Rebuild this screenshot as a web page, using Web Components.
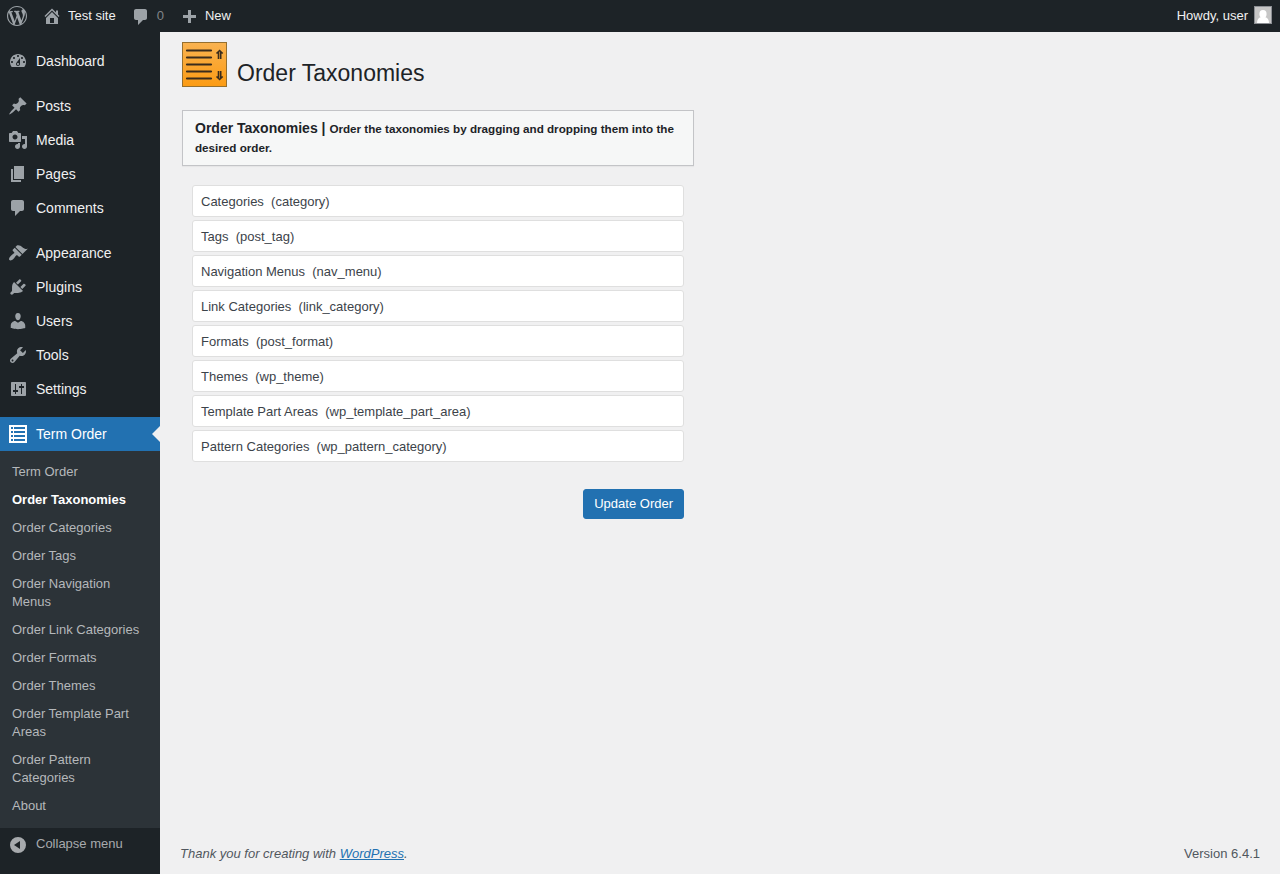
<!DOCTYPE html>
<html lang="en">
<head>
<meta charset="utf-8">
<meta name="viewport" content="width=device-width, initial-scale=1">
<title>Order Taxonomies ‹ Test site — WordPress</title>
<style>
  body { margin: 0; background: #f0f0f1; color: #3c434a; font: 13px/18px "Liberation Sans", Arial, sans-serif; }
</style>
</head>
<body>
<admin-page></admin-page>
<script>
const ICONS = {
  wordpress: '<path d="M20 10c0-5.51-4.49-10-10-10C4.48 0 0 4.49 0 10c0 5.52 4.48 10 10 10 5.51 0 10-4.48 10-10zM7.78 15.37L4.37 6.22c.55-.02 1.17-.08 1.17-.08.5-.06.44-1.13-.06-1.11 0 0-1.45.11-2.37.11-.18 0-.37 0-.58-.01C4.12 2.69 6.87 1.11 10 1.11c2.33 0 4.45.87 6.05 2.34-.68-.11-1.65.39-1.65 1.58 0 .74.45 1.36.9 2.1.35.61.55 1.36.55 2.46 0 1.49-1.4 5-1.4 5l-3.03-8.37c.54-.02.82-.17.82-.17.5-.05.44-1.25-.06-1.22 0 0-1.44.12-2.38.12-.87 0-2.33-.12-2.33-.12-.5-.03-.56 1.2-.06 1.22l.92.08 1.26 3.41zM17.41 10c.24-.64.74-1.87.43-4.25.7 1.29 1.05 2.71 1.05 4.25 0 3.29-1.73 6.24-4.4 7.78.97-2.59 1.94-5.2 2.92-7.78zM6.1 18.09C3.12 16.65 1.11 13.53 1.11 10c0-1.3.23-2.48.72-3.59C3.25 10.3 4.67 14.2 6.1 18.09zm4.03-6.63l2.58 6.98c-.86.29-1.76.45-2.71.45-.79 0-1.57-.11-2.29-.33.81-2.38 1.62-4.74 2.42-7.1z"/>',
  home: '<path d="M16 8.5l1.53 1.53-1.06 1.06L10 4.6l-6.47 6.49-1.06-1.06L10 2.5l4 4v-2h2v4zm-6-2.46l6 5.99V18H4v-5.97zM12 17v-5H8v5h4z"/>',
  comments: '<path d="M5 2h9c1.1 0 2 .9 2 2v7c0 1.1-.9 2-2 2h-2l-5 5v-5H5c-1.1 0-2-.9-2-2V4c0-1.1.9-2 2-2z"/>',
  bubble: '<path d="M5 3h9c1.1 0 2 .9 2 2v7c0 1.1-.9 2-2 2h-2l-5 5v-5H5c-1.1 0-2-.9-2-2V5c0-1.1.9-2 2-2z"/>',
  plus: '<path d="M17 9v3h-5v5H9v-5H4V9h5V4h3v5h5z"/>',
  dashboard: '<path d="M3.76 16h12.48c1.1-1.37 1.76-3.11 1.76-5 0-4.42-3.58-8-8-8s-8 3.58-8 8c0 1.89.66 3.63 1.76 5zM10 4c.55 0 1 .45 1 1s-.45 1-1 1-1-.45-1-1 .45-1 1-1zM6 6c.55 0 1 .45 1 1s-.45 1-1 1-1-.45-1-1 .45-1 1-1zm8 0c.55 0 1 .45 1 1s-.45 1-1 1-1-.45-1-1 .45-1 1-1zm-5.37 5.55L12 7v6c0 1.1-.9 2-2 2s-2-.9-2-2c0-.57.24-1.08.63-1.45zM4 10c.55 0 1 .45 1 1s-.45 1-1 1-1-.45-1-1 .45-1 1-1zm12 0c.55 0 1 .45 1 1s-.45 1-1 1-1-.45-1-1 .45-1 1-1zm-5 3c0-.55-.45-1-1-1s-1 .45-1 1 .45 1 1 1 1-.45 1-1z"/>',
  post: '<path d="M10.44 3.02l1.82-1.82 6.36 6.35-1.83 1.82c-1.05-.68-2.48-.57-3.41.36l-.75.75c-.92.93-1.04 2.35-.35 3.41l-1.83 1.82-2.41-2.41-2.8 2.79c-.42.42-3.38 2.71-3.8 2.29s1.86-3.39 2.28-3.81l2.79-2.79L4.1 9.36l1.83-1.82c1.05.69 2.48.57 3.4-.36l.75-.75c.93-.92 1.05-2.35.36-3.41z"/>',
  media: '<path d="M13 11V4c0-.55-.45-1-1-1h-1.67L9 1H5L3.67 3H2c-.55 0-1 .45-1 1v7c0 .55.45 1 1 1h10c.55 0 1-.45 1-1zM7 4.5c1.38 0 2.5 1.12 2.5 2.5S8.38 9.5 7 9.5 4.5 8.38 4.5 7 5.62 4.5 7 4.5zM14 6h5v10.5c0 1.38-1.12 2.5-2.5 2.5S14 17.88 14 16.5s1.12-2.5 2.5-2.5c.17 0 .34.02.5.05V9h-3V6zm-4 8.05V13h2v3.5c0 1.38-1.12 2.5-2.5 2.5S7 17.88 7 16.5 8.12 14 9.5 14c.17 0 .34.02.5.05z"/>',
  page: '<path d="M6 15V2h10v13H6zm-1 1h8v2H3V5h2v11z"/>',
  appearance: '<path d="M14.48 11.06L7.41 3.99l1.5-1.5c.5-.56 2.3-.47 3.51.32 1.21.8 1.43 1.28 2.91 2.1 1.18.64 2.45 1.26 4.45.85zm-.71.71L6.7 4.7 4.93 6.47c-.39.39-.39 1.02 0 1.41l1.06 1.06c.39.39.39 1.03 0 1.42-.6.6-1.43 1.11-2.21 1.69-.35.26-.7.53-1.01.84C1.43 14.23.4 16.08 1.4 17.07c.99 1 2.84-.03 4.18-1.36.31-.31.58-.66.85-1.02.57-.78 1.08-1.61 1.69-2.21.39-.39 1.02-.39 1.41 0l1.06 1.06c.39.39 1.02.39 1.41 0z"/>',
  plugins: '<path d="M13.11 4.36L9.87 7.6 8 5.73l3.24-3.24c.35-.34 1.05-.2 1.56.32.52.51.66 1.21.31 1.55zm-8 1.77l.91-1.12 9.01 9.01-1.19.84c-.71.71-2.63 1.16-3.82 1.16H6.14L4.9 17.26c-.59.59-1.54.59-2.12 0-.59-.58-.59-1.53 0-2.12l1.24-1.24v-3.88c0-1.13.4-3.19 1.09-3.89zm7.26 3.97l3.24-3.24c.34-.35 1.04-.21 1.55.31.52.51.66 1.21.31 1.55l-3.24 3.25z"/>',
  users: '<path d="M10 9.25c-2.27 0-2.73-3.44-2.73-3.44C7 4.02 7.82 2 9.97 2c2.16 0 2.98 2.02 2.71 3.81 0 0-.41 3.44-2.68 3.44zm0 2.57L12.72 10c2.39 0 4.52 2.33 4.52 4.53v2.49s-3.65 1.13-7.24 1.13c-3.65 0-7.24-1.13-7.24-1.13v-2.49c0-2.25 1.94-4.48 4.47-4.48z"/>',
  tools: '<path d="M16.68 9.77c-1.34 1.34-3.3 1.67-4.95.99l-5.41 6.52c-.99.99-2.59.99-3.58 0s-.99-2.59 0-3.57l6.52-5.42c-.68-1.65-.35-3.61.99-4.95 1.28-1.28 3.12-1.62 4.72-1.06l-2.89 2.89 2.82 2.82 2.86-2.87c.53 1.58.18 3.39-1.08 4.65zM3.81 16.21c.4.39 1.04.39 1.43 0 .4-.4.4-1.04 0-1.43-.39-.4-1.03-.4-1.43 0-.39.39-.39 1.03 0 1.43z"/>',
  settings: '<path fill-rule="evenodd" d="M4 3h13c.55 0 1 .45 1 1v12c0 .55-.45 1-1 1H4c-.55 0-1-.45-1-1V4c0-.55.45-1 1-1zM7 5v6H5v2h2v2h1v-2h2v-2H8V5zM13 5v2h-2v2h2v6h1V9h2V7h-2V5z"/>',
  list: '<path fill-rule="evenodd" d="M1 1h18v18H1zM3 3v2h2V3zM6 3v2h11V3zM3 7v2h2V7zM6 7v2h11V7zM3 11v2h2v-2zM6 11v2h11v-2zM3 15v2h2v-2zM6 15v2h11v-2z"/>',
  collapse: '<path fill-rule="evenodd" d="M10 2a8 8 0 1 0 0 16a8 8 0 1 0 0-16zM12 14V6l-6 4z"/>'
};

class WpIcon extends HTMLElement {
  connectedCallback() {
    if (this.shadowRoot) return;
    this.attachShadow({ mode: 'open' }).innerHTML =
      `<style>:host{display:block;flex:none;width:20px;height:20px}svg{display:block;width:100%;height:100%;fill:currentColor}</style>
       <svg viewBox="0 0 20 20" aria-hidden="true">${ICONS[this.getAttribute('name')]}</svg>`;
  }
}

class AdminBar extends HTMLElement {
  constructor() {
    super();
    this.attachShadow({ mode: 'open' }).innerHTML = `
      <style>
        :host { display: flex; justify-content: space-between; height: 32px; background: #1d2327; line-height: 32px; }
        nav { display: flex; }
        a { display: flex; align-items: center; gap: 6px; padding: 0 8px 0 7px; color: #f0f0f1; text-decoration: none; }
        wp-icon { color: #9ca2a7; }
        .count { color: #818589; }
        .avatar { width: 16px; height: 16px; margin-bottom: 2px; border: 1px solid #8c8f94; background: #c6c6c6; }
      </style>
      <nav aria-label="Toolbar">
        <a href="#" aria-label="About WordPress"><wp-icon name="wordpress"></wp-icon></a>
        <a href="#"><wp-icon name="home"></wp-icon><span>Test site</span></a>
        <a href="#"><wp-icon name="bubble"></wp-icon><span class="count">0</span></a>
        <a href="#"><wp-icon name="plus"></wp-icon><span>New</span></a>
      </nav>
      <a href="#"><span>Howdy, user</span>
        <svg class="avatar" viewBox="0 0 16 16" aria-hidden="true"><ellipse cx="8" cy="7" rx="3.6" ry="4" fill="#fff"/><path d="M2 16c0-3.500 1.500-5.500 4-6h4c2.500.5 4 2.500 4 6z" fill="#fff"/></svg>
      </a>`;
  }
}

class MenuItem extends HTMLElement {
  constructor() {
    super();
    this.attachShadow({ mode: 'open' }).innerHTML = `
      <style>
        :host { display: block; font-size: 14px; }
        :host([spaced]) { margin-top: 11px; }
        a { position: relative; display: flex; align-items: center; gap: 8px; height: 34px; padding: 0 8px; color: #f0f0f1; text-decoration: none; }
        wp-icon { color: #9ca2a7; }
        :host([current]) a { background: #2271b1; color: #fff; }
        :host([current]) wp-icon { color: #fff; }
        :host([current]) a::after { content: ""; position: absolute; right: 0; top: 9px; border: 8px solid transparent; border-left: 0; border-right-color: #f0f0f1; }
      </style>
      <a href="#"><wp-icon name="${this.getAttribute('icon')}"></wp-icon><slot></slot></a>`;
  }
}

class SubmenuItem extends HTMLElement {
  constructor() {
    super();
    this.attachShadow({ mode: 'open' }).innerHTML = `
      <style>
        :host { display: block; }
        a { display: block; padding: 5px 12px; color: #b5b8bb; text-decoration: none; }
        :host([current]) a { color: #fff; font-weight: 600; }
      </style>
      <a href="#"><slot></slot></a>`;
  }
}

class AdminMenu extends HTMLElement {
  constructor() {
    super();
    this.attachShadow({ mode: 'open' }).innerHTML = `
      <style>
        :host { display: block; flex: none; width: 160px; box-sizing: border-box; padding: 12px 0; background: #1d2327; }
        .sub { padding: 7px 0 8px; background: #2c3338; }
        button { display: flex; align-items: center; gap: 8px; width: 100%; height: 34px; padding: 0 8px; border: 0; background: none; color: #a7aaad; font: inherit; text-align: left; }
        button span { line-height: 18px; padding-bottom: 2px; }
      </style>
      <nav aria-label="Main menu">
        <menu-item icon="dashboard">Dashboard</menu-item>
        <menu-item icon="post" spaced>Posts</menu-item>
        <menu-item icon="media">Media</menu-item>
        <menu-item icon="page">Pages</menu-item>
        <menu-item icon="comments">Comments</menu-item>
        <menu-item icon="appearance" spaced>Appearance</menu-item>
        <menu-item icon="plugins">Plugins</menu-item>
        <menu-item icon="users">Users</menu-item>
        <menu-item icon="tools">Tools</menu-item>
        <menu-item icon="settings">Settings</menu-item>
        <menu-item icon="list" spaced current>Term Order</menu-item>
        <div class="sub">
          <submenu-item>Term Order</submenu-item>
          <submenu-item current>Order Taxonomies</submenu-item>
          <submenu-item>Order Categories</submenu-item>
          <submenu-item>Order Tags</submenu-item>
          <submenu-item>Order Navigation Menus</submenu-item>
          <submenu-item>Order Link Categories</submenu-item>
          <submenu-item>Order Formats</submenu-item>
          <submenu-item>Order Themes</submenu-item>
          <submenu-item>Order Template Part Areas</submenu-item>
          <submenu-item>Order Pattern Categories</submenu-item>
          <submenu-item>About</submenu-item>
        </div>
      </nav>
      <button type="button"><wp-icon name="collapse"></wp-icon><span>Collapse menu</span></button>`;
  }
}

class PageHeading extends HTMLElement {
  constructor() {
    super();
    this.attachShadow({ mode: 'open' }).innerHTML = `
      <style>
        :host { display: flex; align-items: flex-end; gap: 10px; }
        svg { flex: none; width: 45px; height: 45px; }
        h1 { margin: 0; color: #1d2327; font-size: 23px; font-weight: 400; line-height: 28px; }
      </style>
      <svg viewBox="0 0 45 45" aria-hidden="true">
        <defs><linearGradient id="g" x2="0" y2="1"><stop stop-color="#f9b351"/><stop offset="1" stop-color="#fc9b13"/></linearGradient></defs>
        <rect x=".5" y=".5" width="44" height="44" fill="url(#g)" stroke="#96702f"/>
        <path d="M5 8.500h24M5 15.500h24M5 22.500h24M5 29.500h24M5 36.500h24" stroke="#3a2c1c" stroke-width="2.200" stroke-linecap="round"/>
        <path d="M36.500 17V9.500M38.700 17V9.500M34.500 11.500l3.100-3 3.100 3M36.500 29v7.500M38.700 29v7.500M34.500 34.500l3.100 3 3.100-3" fill="none" stroke="#3a2c1c" stroke-width="1.600"/>
      </svg>
      <h1><slot></slot></h1>`;
  }
}

class InfoBox extends HTMLElement {
  constructor() {
    super();
    this.attachShadow({ mode: 'open' }).innerHTML = `
      <style>
        :host { display: block; padding: 8px 12px; border: 1px solid #c3c4c7; background: #f6f7f7; box-shadow: 0 1px 1px rgba(0,0,0,.04); color: #1d2327; }
        h3 { margin: 0; font-size: 14px; line-height: 19px; }
      </style>
      <h3><slot></slot></h3>`;
  }
}

class TaxonomyItem extends HTMLElement {
  constructor() {
    super();
    this.attachShadow({ mode: 'open' }).innerHTML = `
      <style>
        :host { display: block; padding: 7px 8px 5px; border: 1px solid #dfdfdf; border-radius: 3px; background: #fff; cursor: move; }
      </style>
      <slot></slot>`;
  }
}

class AdminPage extends HTMLElement {
  constructor() {
    super();
    this.attachShadow({ mode: 'open' }).innerHTML = `
      <style>
        :host { display: flex; flex-direction: column; min-height: 100vh; }
        .body { display: flex; flex: 1; }
        .content { display: flex; flex: 1; flex-direction: column; padding: 10px 20px; }
        main { flex: 1; max-width: 512px; padding: 0 2px; }
        info-box { margin-top: 23px; }
        form { display: flex; flex-direction: column; gap: 27px; padding: 19px 10px; }
        .list { display: flex; flex-direction: column; gap: 3px; }
        button { align-self: flex-end; height: 30px; padding: 0 10px; border: 1px solid #2271b1; border-radius: 3px; background: #2271b1; color: #fff; font: inherit; cursor: pointer; }
        footer { display: flex; justify-content: space-between; color: #50575e; line-height: 20px; }
        footer a { color: #2271b1; }
      </style>
      <admin-bar></admin-bar>
      <div class="body">
        <admin-menu></admin-menu>
        <div class="content">
          <main>
            <page-heading>Order Taxonomies</page-heading>
            <info-box>Order Taxonomies | <small>Order the taxonomies by dragging and dropping them into the desired order.</small></info-box>
            <form>
              <div class="list">
                <taxonomy-item>Categories&nbsp; (category)</taxonomy-item>
                <taxonomy-item>Tags&nbsp; (post_tag)</taxonomy-item>
                <taxonomy-item>Navigation Menus&nbsp; (nav_menu)</taxonomy-item>
                <taxonomy-item>Link Categories&nbsp; (link_category)</taxonomy-item>
                <taxonomy-item>Formats&nbsp; (post_format)</taxonomy-item>
                <taxonomy-item>Themes&nbsp; (wp_theme)</taxonomy-item>
                <taxonomy-item>Template Part Areas&nbsp; (wp_template_part_area)</taxonomy-item>
                <taxonomy-item>Pattern Categories&nbsp; (wp_pattern_category)</taxonomy-item>
              </div>
              <button type="button">Update Order</button>
            </form>
          </main>
          <footer><em>Thank you for creating with <a href="#">WordPress</a>.</em><span>Version 6.4.1</span></footer>
        </div>
      </div>`;
  }
}

customElements.define('wp-icon', WpIcon);
customElements.define('admin-bar', AdminBar);
customElements.define('menu-item', MenuItem);
customElements.define('submenu-item', SubmenuItem);
customElements.define('admin-menu', AdminMenu);
customElements.define('page-heading', PageHeading);
customElements.define('info-box', InfoBox);
customElements.define('taxonomy-item', TaxonomyItem);
customElements.define('admin-page', AdminPage);
</script>
</body>
</html>
